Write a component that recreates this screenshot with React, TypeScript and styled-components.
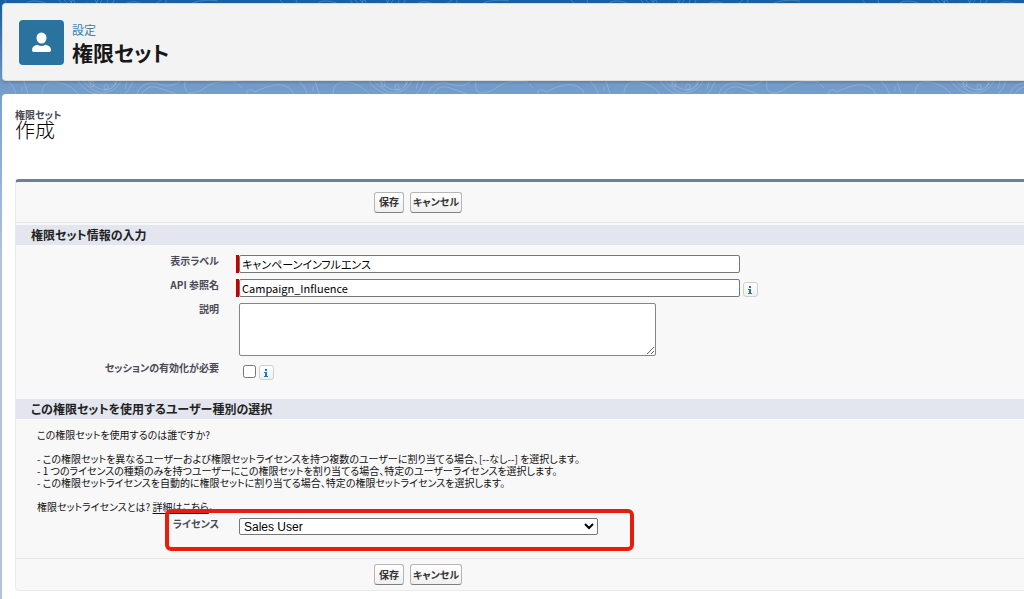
import React from 'react';
import styled, { createGlobalStyle } from 'styled-components';

const GlobalStyle = createGlobalStyle`
  *, *::before, *::after { box-sizing: border-box; }
  body {
    margin: 0;
    font-family: "Noto Sans CJK JP", sans-serif;
    font-feature-settings: "palt";
    color: #111;
  }
  button, input, textarea, select { font: inherit; font-feature-settings: inherit; }
`;

const Page = styled.div`
  min-height: 100vh;
  display: flex;
  flex-direction: column;
  padding-left: 2px;
  background: linear-gradient(#1b5fa1 0, #1b5fa1 4px, #7399c6 84px, #7ea3d0 110px, #b0c4df 260px, #b0c4df 100%);
`;

const Band = styled.svg<{ $height: number }>`
  display: block;
  width: 100%;
  height: ${(p) => p.$height}px;
  flex: none;
`;

const Header = styled.header`
  position: relative;
  display: flex;
  align-items: center;
  gap: 8px;
  height: 78px;
  padding: 0 16px;
  background: #f3f3f3;
  border: 1px solid #dddbda;
  border-right: 0;
  border-radius: 4px 0 0 4px;
  box-shadow: 0 2px 2px rgba(0, 0, 0, 0.12);
`;

const HeaderIcon = styled.span`
  display: flex;
  align-items: center;
  justify-content: center;
  width: 45px;
  height: 45px;
  border-radius: 4px;
  background: #2a739e;
`;

const HeaderTitle = styled.h1`
  display: flex;
  flex-direction: column;
  margin: 0;
  font-size: 21px;
  line-height: 24px;
  font-weight: 700;
  color: #181818;
`;

const Eyebrow = styled.span`
  font-size: 12px;
  line-height: 20px;
  font-weight: 400;
  color: #3b80a8;
`;

const Content = styled.main`
  flex: 1;
  padding: 15px 0 9px 13px;
  background: #fff;
  border-radius: 4px 0 0 0;
`;

const PageTitle = styled.h2`
  display: flex;
  flex-direction: column;
  margin: 0 0 40px;
  font-size: 20px;
  line-height: 18px;
  font-weight: 300;
  color: #000;
`;

const PageType = styled.span`
  font-size: 10px;
  line-height: 12px;
  font-weight: 700;
  color: #4a4a56;
`;

const Panel = styled.form`
  background: #f8f8f8;
  border: 1px solid #eaeaea;
  border-top: 3px solid #747e96;
  border-right: 0;
  border-radius: 4px 0 0 4px;
`;

const ButtonRow = styled.div<{ $bottom?: boolean }>`
  display: flex;
  align-items: center;
  gap: 6px;
  height: ${(p) => (p.$bottom ? 32 : 41)}px;
  padding-left: 358px;
  border: 0 solid #e6e6e6;
  border-width: ${(p) => (p.$bottom ? '1px 0 0' : '0 0 1px')};
`;

const Button = styled.button`
  min-width: 30px;
  height: 21px;
  padding: 0 2px;
  border: 1px solid #b5b5b5;
  border-bottom-color: #7f7f7f;
  border-radius: 3px;
  background: linear-gradient(#fff, #f0f0f0);
  font-size: 10px;
  line-height: 18px;
  font-weight: 700;
  color: #333;
`;

const SectionTitle = styled.h3`
  margin: 2px 0 0;
  padding-left: 15px;
  background: #e3e6ee;
  font-size: 12px;
  line-height: 20px;
  font-weight: 700;
  color: #222;
`;

const Fields = styled.div`
  display: flex;
  flex-direction: column;
  gap: 6px;
  padding: 10px 0 17px;
`;

const Row = styled.div`
  position: relative;
  display: flex;
  align-items: flex-start;
`;

const Label = styled.label`
  width: 203px;
  flex: none;
  text-align: right;
  font-size: 10px;
  line-height: 12px;
  font-weight: 700;
  color: #4a4a56;
`;

const Field = styled.div<{ $required?: boolean }>`
  display: flex;
  align-items: flex-start;
  gap: 3px;
  margin-left: 17px;
  border-left: 3px solid ${(p) => (p.$required ? '#c00' : 'transparent')};
`;

const TextInput = styled.input`
  width: 501px;
  height: 18px;
  padding: 0 2px;
  border: 1px solid #767676;
  border-radius: 2px;
  background: #fff;
  font-size: 11px;
  line-height: 16px;
  color: #000;
`;

const TextArea = styled.textarea`
  display: block;
  width: 417px;
  height: 53px;
  border: 1px solid #858585;
  border-radius: 2px;
  background: #fff;
  font-size: 11px;
`;

const Checkbox = styled.input`
  width: 13px;
  height: 13px;
  margin: 3px 0 0 4px;
`;

const InfoButton = styled.button`
  display: flex;
  width: 15px;
  height: 15px;
  margin-top: 3px;
  padding: 0;
  align-items: center;
  justify-content: center;
  border: 1px solid #cfcfcf;
  border-radius: 3px;
  background: linear-gradient(#fff, #eef0f4);
`;

const Note = styled.div`
  padding: 10px 20px 0 21px;
  font-size: 10px;
  line-height: 12px;
  color: #111;

  p { margin: 0 0 12px; }
  p:last-child { margin: 0; }
  a { color: inherit; text-underline-offset: 2px; }
`;

const LicenseRow = styled(Row)`
  padding: 5px 0 23px;
`;

const Select = styled.select`
  width: 359px;
  height: 17px;
  padding: 0;
  border: 1px solid #767676;
  border-radius: 2px;
  background: #fff;
  font-family: "Liberation Sans", "Noto Sans CJK JP", sans-serif;
  font-size: 12px;
  line-height: 14px;
  color: #000;
`;

const Highlight = styled.div`
  position: absolute;
  top: -4px;
  left: 149px;
  width: 469px;
  height: 42px;
  border: 4px solid #ea1c0d;
  border-radius: 6px;
  pointer-events: none;
`;

function Contours({ id, height, shift }: { id: string; height: number; shift: number }) {
  return (
    <Band $height={height} aria-hidden="true">
      <defs>
        <pattern id={id} width="291" height="13" patternUnits="userSpaceOnUse" x={shift}>
          <g fill="none" stroke="#fff" strokeOpacity="0.18">
            <path d="M1 13C1 5 5 1 12 1C20 1 27 4 32 8C34 10 36 11 37 13" />
            <path d="M37 0C42 7 49 13 57 13M42 0C47 5 52 10 60 12C68 12 76 8 80 0M47 0C52 5 58 9 65 9C71 8 74 5 76 0" />
            <ellipse cx="51" cy="3" rx="2" ry="3" />
            <ellipse cx="65" cy="6" rx="2" ry="3" />
            <path d="M73 0C75 2 75 4 72 5M86 0L84 8M92 0C90 5 88 9 84 13M96 13C98 5 106 1 114 2C122 4 130 8 139 0M101 13C104 7 111 4 118 7C124 9 130 11 135 13" />
            <path d="M144 0C143 6 144 13 151 12C163 11 166 2 178 1C184 0 190 0 196 1M197 3L201 7" />
            <path d="M206 13C204 9 210 7 214 11C226 5 236 2 244 5C249 7 252 10 252 13M258 0C262 4 265 8 266 13M274 0L278 13M272 6V10" />
          </g>
        </pattern>
      </defs>
      <rect width="100%" height="100%" fill={`url(#${id})`} />
    </Band>
  );
}

function Info() {
  return (
    <InfoButton type="button" aria-label="情報">
      <svg width="5" height="8" viewBox="0 0 5 8" fill="#1a76d2" aria-hidden="true">
        <path d="M1 0h2v2H1zM0 3h3v4h1v1H0V7h1V4H0z" />
      </svg>
    </InfoButton>
  );
}

function Actions({ bottom }: { bottom?: boolean }) {
  return (
    <ButtonRow $bottom={bottom}>
      <Button type="button">保存</Button>
      <Button type="button">キャンセル</Button>
    </ButtonRow>
  );
}

export default function App() {
  return (
    <>
      <GlobalStyle />
      <Page>
        <Contours id="contour-top" height={3} shift={20} />
        <Header>
          <HeaderIcon>
            <svg width="21" height="21" viewBox="0 0 21 21" fill="#fff" aria-hidden="true">
              <ellipse cx="10.5" cy="6" rx="5" ry="5.5" />
              <path d="M1 18C1 15 3 13.500 6.500 12.800C9 14.500 12 14.500 14.500 12.800C18 13.500 20 15 20 18C20 19.500 19 20 18 20H3C2 20 1 19.500 1 18Z" />
            </svg>
          </HeaderIcon>
          <HeaderTitle>
            <Eyebrow>設定</Eyebrow>
            権限セット
          </HeaderTitle>
        </Header>
        <Contours id="contour-gap" height={13} shift={39} />
        <Content>
          <PageTitle>
            <PageType>権限セット</PageType>
            作成
          </PageTitle>
          <Panel>
            <Actions />
            <SectionTitle>権限セット情報の入力</SectionTitle>
            <Fields>
              <Row>
                <Label htmlFor="label">表示ラベル</Label>
                <Field $required>
                  <TextInput id="label" defaultValue="キャンペーンインフルエンス" />
                </Field>
              </Row>
              <Row>
                <Label htmlFor="api">API 参照名</Label>
                <Field $required>
                  <TextInput id="api" defaultValue="Campaign_Influence" />
                  <Info />
                </Field>
              </Row>
              <Row>
                <Label htmlFor="description">説明</Label>
                <Field>
                  <TextArea id="description" />
                </Field>
              </Row>
              <Row>
                <Label htmlFor="session">セッションの有効化が必要</Label>
                <Field>
                  <Checkbox id="session" type="checkbox" />
                  <Info />
                </Field>
              </Row>
            </Fields>
            <SectionTitle>この権限セットを使用するユーザー種別の選択</SectionTitle>
            <Note>
              <p>この権限セットを使用するのは誰ですか?</p>
              <p>
                - この権限セットを異なるユーザーおよび権限セットライセンスを持つ複数のユーザーに割り当てる場合、[--なし--] を選択します。
                <br />
                - 1 つのライセンスの種類のみを持つユーザーにこの権限セットを割り当てる場合、特定のユーザーライセンスを選択します。
                <br />
                - この権限セットライセンスを自動的に権限セットに割り当てる場合、特定の権限セットライセンスを選択します。
              </p>
              <p>
                権限セットライセンスとは? <a href="#license">詳細はこちら</a>。
              </p>
            </Note>
            <LicenseRow>
              <Label htmlFor="license">ライセンス</Label>
              <Field>
                <Select id="license" defaultValue="Sales User">
                  <option>Sales User</option>
                </Select>
              </Field>
              <Highlight />
            </LicenseRow>
            <Actions bottom />
          </Panel>
        </Content>
      </Page>
    </>
  );
}
